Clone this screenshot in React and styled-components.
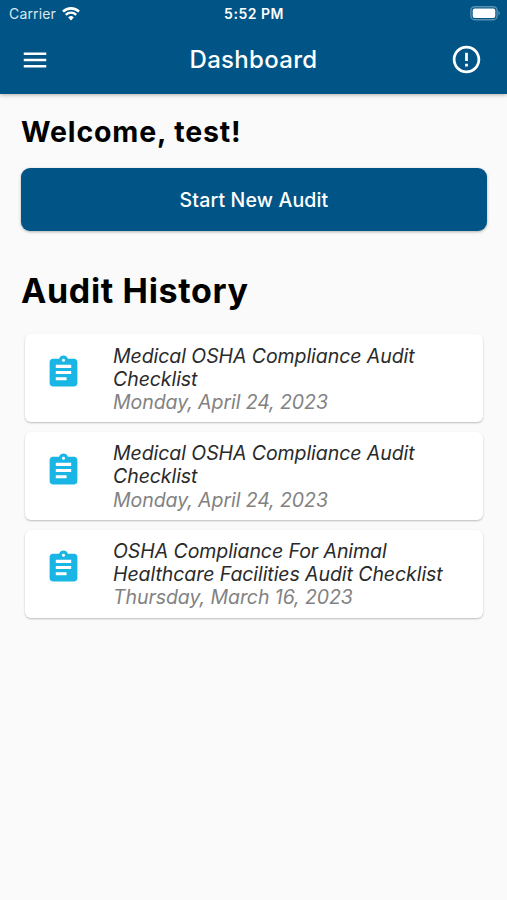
import React from "react";
import styled, { createGlobalStyle } from "styled-components";
import { MdAssignment, MdErrorOutline, MdMenu } from "react-icons/md";

const GlobalStyle = createGlobalStyle`
  * {
    box-sizing: border-box;
  }

  body {
    margin: 0;
    background-color: #fafafa;
    font-family: Inter, "Liberation Sans", sans-serif;
  }
`;

const Screen = styled.div`
  display: flex;
  flex-direction: column;
  height: 100vh;
  overflow: hidden;
  background-color: #fafafa;
`;

const Header = styled.header`
  height: 94px;
  flex-shrink: 0;
  color: #fff;
  background-color: #005586;
  box-shadow: 0 1px 4px rgba(0, 0, 0, 0.3);
`;

const StatusBar = styled.div`
  display: grid;
  grid-template-columns: 1fr auto 1fr;
  align-items: center;
  height: 26px;
  padding: 1px 6px 0 7px;
`;

const Carrier = styled.div`
  display: flex;
  align-items: center;
  gap: 6px;
  padding-left: 2px;
  font-size: 14px;
  letter-spacing: 0.15px;
  color: #dbe8f0;
`;

const Time = styled.div`
  font-size: 14px;
  font-weight: 600;
  letter-spacing: 0.5px;
`;

const Battery = styled.div`
  display: flex;
  justify-content: flex-end;
`;

const Toolbar = styled.div`
  display: grid;
  grid-template-columns: 1fr auto 1fr;
  align-items: center;
  height: 67px;
  padding: 0 20px;
`;

const IconButton = styled.button`
  display: flex;
  justify-self: ${({ $end }) => ($end ? "end" : "start")};
  margin-right: ${({ $end }) => ($end ? "4px" : "0")};
  padding: 0;
  border: 0;
  color: inherit;
  background: none;
  font-size: ${({ $size }) => $size}px;
`;

const Title = styled.div`
  padding-top: 1px;
  font-size: 24px;
  font-weight: 500;
  line-height: 30px;
  letter-spacing: 0.3px;
`;

const Content = styled.main`
  padding: 21px 20px 0 21px;
`;

const Welcome = styled.h2`
  margin: 0 0 19px;
  font-size: 28.5px;
  font-weight: 700;
  line-height: 34px;
  letter-spacing: 0.85px;
`;

const StartButton = styled.button`
  display: block;
  width: 100%;
  height: 62.5px;
  padding: 1px 0 0;
  border: 0;
  border-radius: 9px;
  color: #fff;
  background-color: #005586;
  box-shadow: 0 1px 3px rgba(0, 0, 0, 0.3);
  font-family: inherit;
  font-size: 19.5px;
  font-weight: 500;
  letter-spacing: 0.15px;
`;

const HistoryTitle = styled.h1`
  margin: 40.5px 0 23.4px;
  font-size: 34px;
  font-weight: 700;
  line-height: 40px;
  letter-spacing: 0.65px;
`;

const AuditList = styled.div`
  display: flex;
  flex-direction: column;
  gap: 9.7px;
  padding: 0 4px;
`;

const AuditCard = styled.div`
  display: flex;
  height: 88px;
  padding: 10.2px 20px 0;
  border-radius: 6px;
  background-color: #fff;
  box-shadow: 0 1px 2px rgba(0, 0, 0, 0.25);
`;

const AuditIcon = styled.div`
  display: flex;
  width: 68px;
  padding-top: 9.4px;
  color: #19b5e5;
  font-size: 37px;
`;

const AuditText = styled.div`
  flex: 1;
  font-size: 19.5px;
  font-style: italic;
  line-height: 23.2px;
  letter-spacing: -0.07px;
  white-space: pre-line;
  color: #2a2a2a;
`;

const AuditDate = styled.div`
  color: #828282;
`;

const audits = [
  {
    id: 1,
    name: "Medical OSHA Compliance Audit\nChecklist",
    date: "Monday, April 24, 2023",
  },
  {
    id: 2,
    name: "Medical OSHA Compliance Audit\nChecklist",
    date: "Monday, April 24, 2023",
  },
  {
    id: 3,
    name: "OSHA Compliance For Animal\nHealthcare Facilities Audit Checklist",
    date: "Thursday, March 16, 2023",
  },
];

const WifiIcon = () => (
  <svg width="18" height="14" viewBox="0 0 18 14" fill="none">
    <path d="M1 4.6a11.6 11.6 0 0 1 16 0" stroke="#fff" strokeWidth="2.6" />
    <path d="M3.8 7.8a7.4 7.4 0 0 1 10.4 0" stroke="#fff" strokeWidth="2.4" />
    <path d="M6.2 10.4a4 4 0 0 1 5.6 0L9 13.4z" fill="#fff" />
  </svg>
);

const BatteryIcon = () => (
  <svg width="31" height="15" viewBox="0 0 31 15" fill="none">
    <rect x="0.9" y="0.7" width="26.2" height="13" rx="3.8" stroke="#fff" strokeOpacity="0.35" strokeWidth="1.4" />
    <rect x="2.7" y="2.5" width="22.6" height="9.4" rx="2" fill="#fff" />
    <path d="M28.6 5q2 2.2 0 4.4z" fill="#fff" fillOpacity="0.5" />
  </svg>
);

const AuditItem = ({ name, date }) => {
  return (
    <AuditCard>
      <AuditIcon>
        <MdAssignment />
      </AuditIcon>
      <AuditText>
        {name}
        <AuditDate>{date}</AuditDate>
      </AuditText>
    </AuditCard>
  );
};

const App = () => {
  return (
    <Screen>
      <GlobalStyle />
      <Header>
        <StatusBar>
          <Carrier>
            Carrier
            <WifiIcon />
          </Carrier>
          <Time>5:52 PM</Time>
          <Battery>
            <BatteryIcon />
          </Battery>
        </StatusBar>
        <Toolbar>
          <IconButton $size={30} aria-label="Menu">
            <MdMenu />
          </IconButton>
          <Title>Dashboard</Title>
          <IconButton $size={33} $end aria-label="Info">
            <MdErrorOutline />
          </IconButton>
        </Toolbar>
      </Header>
      <Content>
        <Welcome>Welcome, test!</Welcome>
        <StartButton>Start New Audit</StartButton>
        <HistoryTitle>Audit History</HistoryTitle>
        <AuditList>
          {audits.map((audit) => (
            <AuditItem key={audit.id} name={audit.name} date={audit.date} />
          ))}
        </AuditList>
      </Content>
    </Screen>
  );
};

export default App;
